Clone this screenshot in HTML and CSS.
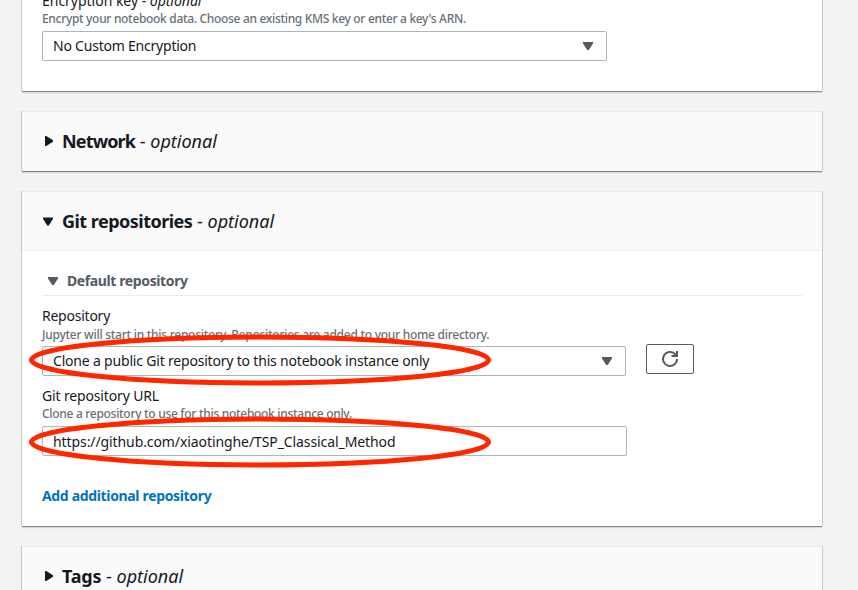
FILE: index.html
```html
<!DOCTYPE html>
<html lang="en">
<head>
<meta charset="utf-8">
<title>Create notebook instance</title>
<link rel="stylesheet" href="styles.css">
</head>
<body>
<main class="page">
  <section class="card card-encryption">
    <div class="label label-key">Encryption key - <i>optional</i></div>
    <div class="hint hint-key">Encrypt your notebook data. Choose an existing KMS key or enter a key's ARN.</div>
    <div class="field field-key"><span class="t-key">No Custom Encryption</span><svg class="caret" width="10" height="8" viewBox="0 0 10 8"><path d="M0 0h10v1.5L5.8 8H4.2L0 1.5z"/></svg></div>
  </section>

  <section class="card">
    <h2 class="head head-closed"><svg class="arrow" width="10" height="10" viewBox="0 0 10 10"><path d="M1 0h1.2L9 4.3v1.4L2.2 10H1z"/></svg><span class="t-network"><b>Network</b> - <i>optional</i></span></h2>
  </section>

  <section class="card card-git">
    <h2 class="head head-open"><svg class="arrow arrow-open" width="10" height="10" viewBox="0 0 10 10"><path d="M0 1.5h10V3L5.8 9.5H4.2L0 3z"/></svg><span class="t-git"><b>Git repositories</b> - <i>optional</i></span></h2>
    <div class="body">
      <h3 class="sub"><svg width="10" height="8" viewBox="0 0 10 8"><path d="M0 0h10v1.5L5.8 8H4.2L0 1.5z"/></svg><span class="t-default">Default repository</span></h3>
      <div class="label t-repo">Repository</div>
      <div class="hint hint-repo">Jupyter will start in this repository. Repositories are added to your home directory.</div>
      <div class="row">
        <div class="field field-repo"><span class="t-clone">Clone a public Git repository to this notebook instance only</span><svg class="caret" width="10" height="8" viewBox="0 0 10 8"><path d="M0 0h10v1.5L5.8 8H4.2L0 1.5z"/></svg></div>
        <button class="refresh" aria-label="Refresh"><svg width="18" height="18" viewBox="0 0 18 18"><path d="M16 9A7 7 0 1 1 13.6 3.7L15.5 5.5M16 1v5h-5.5" fill="none" stroke="currentColor" stroke-width="2"/></svg></button>
      </div>
      <div class="label label-url">Git repository URL</div>
      <div class="hint hint-url">Clone a repository to use for this notebook instance only.</div>
      <div class="field field-url"><span class="t-url">https://github.com/xiaotinghe/TSP_Classical_Method</span></div>
      <a class="add">Add additional repository</a>
    </div>
  </section>

  <section class="card">
    <h2 class="head head-closed"><svg class="arrow" width="10" height="10" viewBox="0 0 10 10"><path d="M1 0h1.2L9 4.3v1.4L2.2 10H1z"/></svg><span class="t-tags"><b>Tags</b> - <i>optional</i></span></h2>
  </section>
</main>
<svg class="marks" width="858" height="590" viewBox="0 0 858 590">
  <ellipse cx="260" cy="360" rx="228.5" ry="23"/>
  <ellipse cx="260" cy="442" rx="228.5" ry="23"/>
</svg>
</body>
</html>
```

FILE: styles.css
```css
* { box-sizing: border-box; }
body {
  margin: 0;
  height: 590px;
  overflow: hidden;
  background: #f2f3f3;
  color: #16191f;
  font-family: "Noto Sans", "Open Sans", sans-serif;
  font-size: 14px;
}
.page { width: 800px; margin-left: 22px; display: flex; flex-direction: column; gap: 20px; }
.card { flex-shrink: 0; background: #fff; height: 60px; box-shadow: 0 1px 0 0 #7d898d, 1px 0 0 0 #c3caca, -1px 0 0 0 #c3caca, 0 2px 1px 0 #d5dbdb; border-top: 1px solid #eaeded; }
.card-encryption { height: 91px; padding: 0 20px; border-top: 0; }
.card-git { height: 335px; }
.label { line-height: 18px; height: 18px; white-space: nowrap; }
.label-key { margin-top: -8px; letter-spacing: -.02px; }
.hint { font-size: 12px; font-weight: 500; line-height: 16px; height: 16px; color: #687078; white-space: nowrap; }
.hint-key { margin-top: 1px; margin-bottom: 4px; letter-spacing: -.32px; }
.field { height: 30px; border: 1px solid #aab7b8; border-radius: 2px; background: #fff; display: flex; align-items: center; justify-content: space-between; padding: 0 13px 0 10px; white-space: nowrap; }
.field-key { width: 565px; }
.t-key, .t-clone { margin-top: -2px; }
.t-key { letter-spacing: -.22px; }
.caret, .sub svg { fill: #545b64; }
.head { margin: 0; height: 59px; padding-left: 22px; display: flex; align-items: center; gap: 8px; background: #fafafa; font-size: 18px; line-height: 22px; font-weight: 400; white-space: nowrap; }
.head-closed { padding-bottom: 2px; }
.head-open { border-bottom: 1px solid #eaeded; }
.arrow { fill: #16191f; }
.arrow-open { margin: 0 1px 0 -1px; }
.t-network b { letter-spacing: -.85px; }
.t-git b { letter-spacing: -.52px; }
.t-tags b { letter-spacing: -.2px; }
.body { padding: 0 20px; }
.sub { margin: 16px 0 12px; height: 29px; padding-left: 6px; display: flex; align-items: center; gap: 9px; border-bottom: 1px solid #eaeded; font-size: 14px; color: #545b64; }
.t-default { letter-spacing: -.39px; margin-top: -2px; }
.t-repo { margin-top: -1px; letter-spacing: -.24px; }
.hint-repo { margin: 2px 0 1px; letter-spacing: -.27px; }
.row { display: flex; align-items: center; gap: 20px; height: 32px; }
.field-repo { width: 584px; margin-top: 2px; }
.t-clone { letter-spacing: -.19px; }
.refresh { width: 48px; height: 30px; margin-top: -2px; padding: 0; border: 1px solid #545b64; border-radius: 2px; background: #fff; color: #545b64; display: flex; align-items: center; justify-content: center; }
.label-url { margin-top: 11px; letter-spacing: -.15px; }
.hint-url { margin: 1px 0 4px; letter-spacing: -.3px; }
.field-url { width: 585px; }
.t-url { letter-spacing: -.09px; }
.add { display: block; margin-top: 31px; line-height: 18px; font-weight: 700; letter-spacing: -.34px; color: #0073bb; white-space: nowrap; }
.marks { position: absolute; left: 0; top: 0; fill: none; stroke: #ff2600; stroke-width: 5; }
```
